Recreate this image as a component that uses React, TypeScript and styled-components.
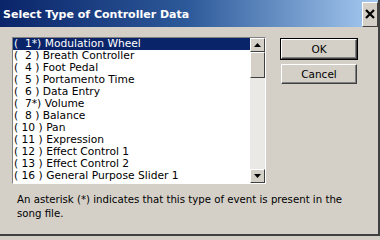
import React from 'react';
import styled, { createGlobalStyle } from 'styled-components';

const GlobalStyle = createGlobalStyle`
  html, body {
    margin: 0;
    padding: 0;
    background: #d4d0c8;
  }
  body {
    font-family: "DejaVu Sans", "Liberation Sans", sans-serif;
    font-size: 10px;
  }
`;

const Frame = styled.div`
  width: 380px;
  height: 236px;
  box-sizing: border-box;
  background: #d4d0c8;
  border-right: 2px solid #404040;
  border-bottom: 2px solid #404040;
  display: flex;
  flex-direction: column;
  overflow: hidden;
`;

const TitleBar = styled.div`
  height: 27px;
  display: flex;
  align-items: center;
  justify-content: space-between;
  padding: 0 0 0 3px;
  background: linear-gradient(to right, #0a246a 0%, #2d5a9a 50%, #a6caf0 100%);
`;

const Title = styled.span`
  color: #ffffff;
  font-weight: bold;
  font-size: 11px;
  padding-top: 1px;
`;

const CloseButton = styled.div`
  width: 16px;
  height: 25px;
  margin-top: 1px;
  box-sizing: border-box;
  background: #d4d0c8;
  border-top: 1px solid #ffffff;
  border-left: 1px solid #ffffff;
  border-right: 1px solid #404040;
  border-bottom: 1px solid #404040;
  display: flex;
  align-items: center;
  justify-content: center;
`;

const Body = styled.div`
  padding: 10px 0 0 12px;
  display: flex;
  flex-direction: column;
  align-items: flex-start;
`;

const Row = styled.div`
  display: flex;
  align-items: flex-start;
`;

const ListBox = styled.div`
  width: 254px;
  height: 147px;
  box-sizing: border-box;
  border-top: 1px solid #808080;
  border-left: 1px solid #808080;
  border-right: 1px solid #ffffff;
  border-bottom: 1px solid #ffffff;
  background: #ffffff;
  display: flex;
  overflow: hidden;
`;

const Items = styled.div`
  flex: 1;
  overflow: hidden;
`;

const Item = styled.div<{ $selected?: boolean }>`
  height: 12px;
  line-height: 12px;
  font-size: 10.7px;
  padding-left: 1px;
  white-space: pre;
  color: ${({ $selected }) => ($selected ? '#ffffff' : '#000000')};
  background: ${({ $selected }) => ($selected ? '#0a246a' : 'transparent')};
`;

const ScrollBar = styled.div`
  width: 15px;
  display: flex;
  flex-direction: column;
  background: #ebe9e5;
`;

const ScrollButton = styled.div<{ $grow?: number }>`
  height: ${({ $grow }) => ($grow ? `${$grow}px` : '14px')};
  box-sizing: border-box;
  background: #d4d0c8;
  border-top: 1px solid #ffffff;
  border-left: 1px solid #ffffff;
  border-right: 1px solid #404040;
  border-bottom: 1px solid #404040;
  display: flex;
  align-items: center;
  justify-content: center;
`;

const Track = styled.div`
  flex: 1;
`;

const Buttons = styled.div`
  margin-left: 15px;
  margin-top: 2px;
  display: flex;
  flex-direction: column;
  gap: 5px;
`;

const Button = styled.button<{ $default?: boolean }>`
  width: 76px;
  height: 20px;
  box-sizing: border-box;
  font-family: inherit;
  font-size: 10.5px;
  color: #000000;
  background: #d4d0c8;
  padding: 0;
  border-top: 1px solid #ffffff;
  border-left: 1px solid #ffffff;
  border-right: 1px solid #404040;
  border-bottom: 1px solid #404040;
  outline: ${({ $default }) => ($default ? '1px solid #000000' : 'none')};
  box-shadow: inset -1px -1px 0 #808080;
`;

const Note = styled.p`
  margin: 9px 0 0 5px;
  width: 345px;
  max-width: 345px;
  font-size: 10.2px;
  line-height: 14px;
  color: #000000;
`;

const items = [
  '(  1*) Modulation Wheel',
  '(  2 ) Breath Controller',
  '(  4 ) Foot Pedal',
  '(  5 ) Portamento Time',
  '(  6 ) Data Entry',
  '(  7*) Volume',
  '(  8 ) Balance',
  '( 10 ) Pan',
  '( 11 ) Expression',
  '( 12 ) Effect Control 1',
  '( 13 ) Effect Control 2',
  '( 16 ) General Purpose Slider 1',
  '( 17 ) General Purpose Slider 2',
];

const Arrow = ({ up }: { up?: boolean }) => (
  <svg width="7" height="4" viewBox="0 0 7 4">
    <path d={up ? 'M3.5 0 L7 4 L0 4 Z' : 'M0 0 L7 0 L3.5 4 Z'} fill="#000" />
  </svg>
);

export default function App() {
  return (
    <>
      <GlobalStyle />
      <Frame>
        <TitleBar>
          <Title>Select Type of Controller Data</Title>
          <CloseButton>
            <svg width="10" height="10" viewBox="0 0 10 10">
              <path d="M1 1 L9 9 M9 1 L1 9" stroke="#000" strokeWidth="2.2" />
            </svg>
          </CloseButton>
        </TitleBar>
        <Body>
          <Row>
            <ListBox>
              <Items>
                {items.map((it, i) => (
                  <Item key={i} $selected={i === 0}>{it}</Item>
                ))}
              </Items>
              <ScrollBar>
                <ScrollButton><Arrow up /></ScrollButton>
                <ScrollButton $grow={26} />
                <Track />
                <ScrollButton><Arrow /></ScrollButton>
              </ScrollBar>
            </ListBox>
            <Buttons>
              <Button $default>OK</Button>
              <Button>Cancel</Button>
            </Buttons>
          </Row>
          <Note>An asterisk (*) indicates that this type of event is present in the song file.</Note>
        </Body>
      </Frame>
    </>
  );
}
